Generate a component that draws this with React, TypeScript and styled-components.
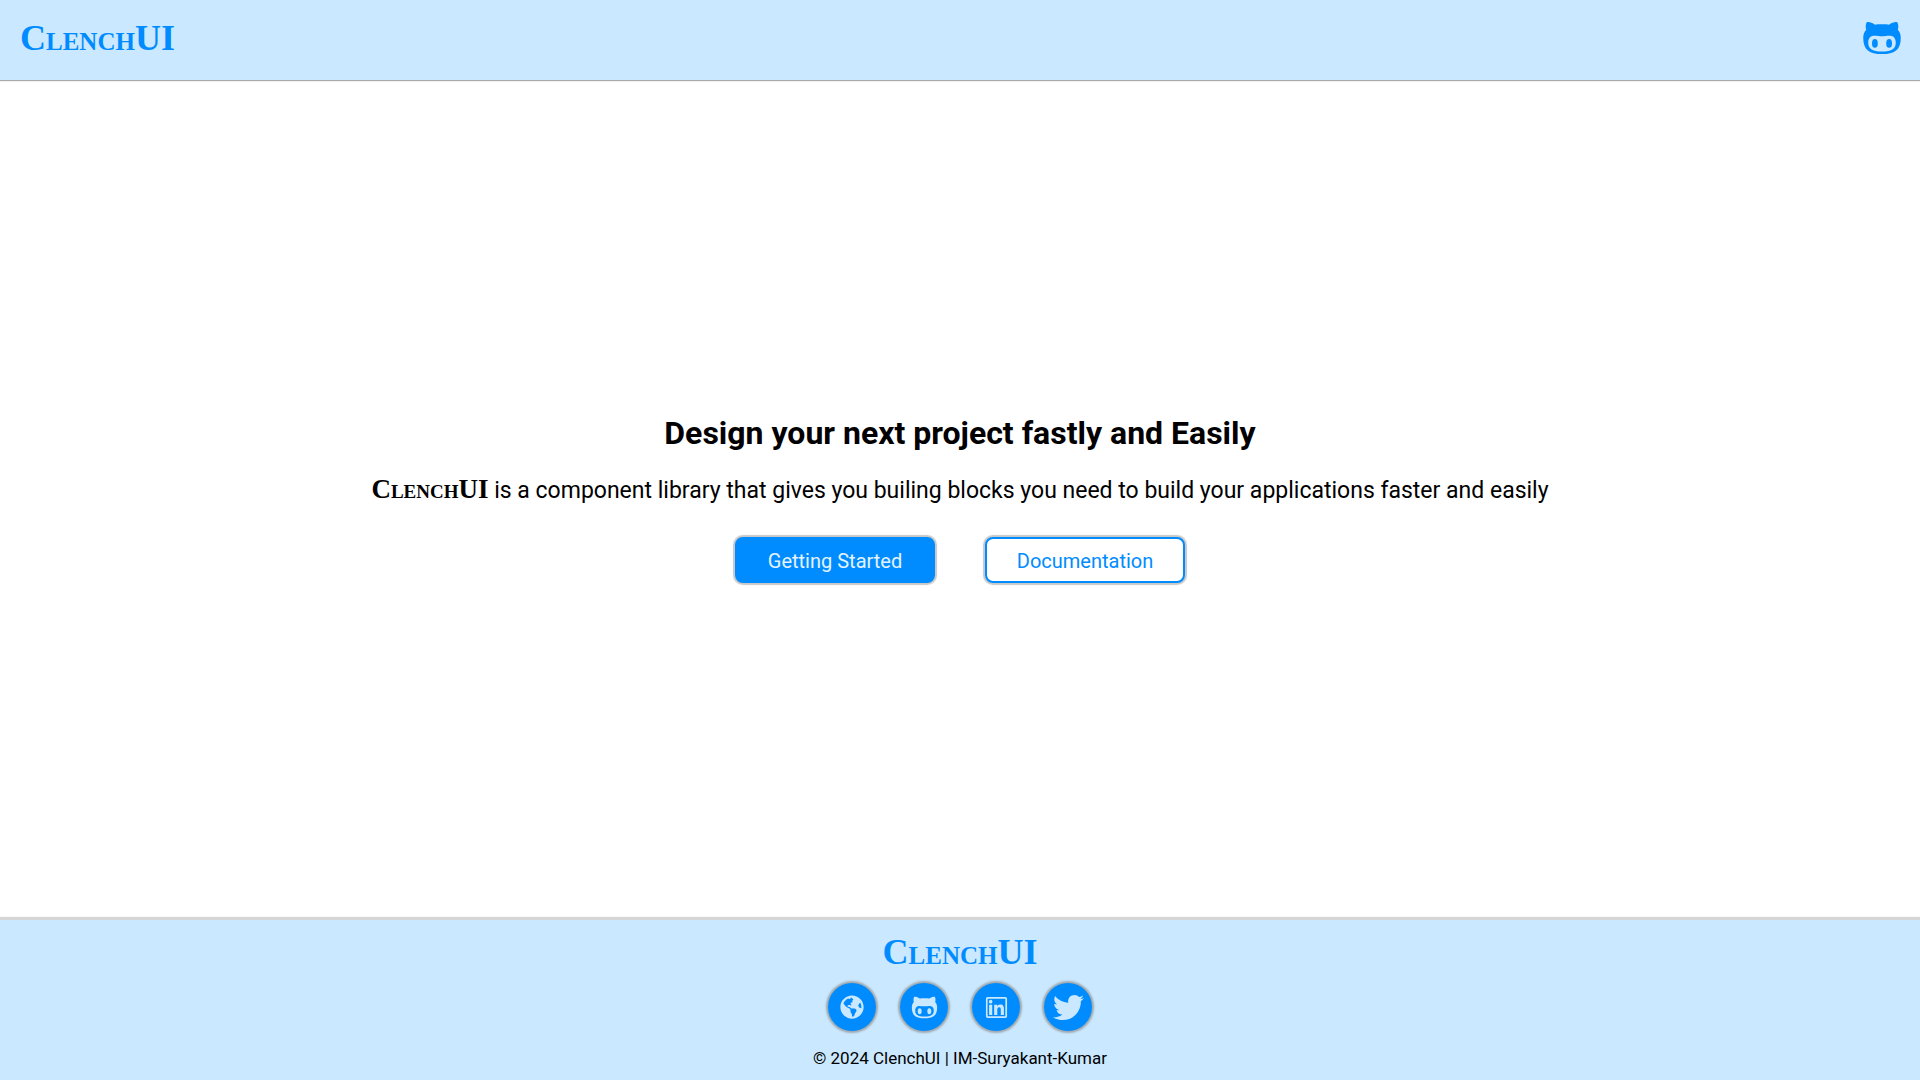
import React from 'react';
import styled, { createGlobalStyle, css } from 'styled-components';
import { FaGlobeAmericas, FaTwitter } from 'react-icons/fa';
import { AiOutlineLinkedin } from 'react-icons/ai';

const accent = '#008cff';
const tint = '#cae8ff';
const sans = "Roboto, 'Noto Sans', sans-serif";
const serif = "'Liberation Serif', 'Times New Roman', serif";

const GlobalStyle = createGlobalStyle`
  * { box-sizing: border-box; }
  body { margin: 0; background: #fff; color: #000; font-family: ${sans}; }
`;

const Page = styled.div`
  min-height: 100vh;
  display: flex;
  flex-direction: column;
`;

const Header = styled.header`
  display: flex;
  align-items: center;
  justify-content: space-between;
  height: 80px;
  padding: 0 18px 4px 20px;
  background: ${tint};
  box-shadow: 0 1px 1px #aaa;
`;

const Brand = styled.a`
  color: ${accent};
  font: 700 36px/36px ${serif};
  font-variant: small-caps;
  text-decoration: none;
`;

const HeaderLink = styled.a`
  display: flex;
  color: ${accent};
  font-size: 40px;
`;

const Hero = styled.main`
  flex: 1;
  display: flex;
  flex-direction: column;
  align-items: center;
  justify-content: center;
  padding: 0 20px;
  text-align: center;
`;

const Title = styled.h1`
  margin: 0 0 28px;
  font-size: 32px;
  line-height: 32px;
  font-weight: 700;
`;

const Lead = styled.p`
  margin: 0 0 32px;
  font-size: 23px;
  line-height: 28px;
`;

const BrandName = styled.strong`
  font: 700 27px/24px ${serif};
  font-variant: small-caps;
`;

const Actions = styled.div`
  display: flex;
  flex-wrap: wrap;
  justify-content: center;
  gap: 50px;
`;

const Button = styled.button<{ $outlined?: boolean }>`
  width: 200px;
  height: 46px;
  padding: 2px 0 0;
  border: 2px solid ${accent};
  border-radius: 8px;
  background: ${accent};
  color: #e3f3ff;
  font: 400 20px/24px ${sans};
  box-shadow: 0 0 1px 2px #c8c8c8;
  cursor: pointer;
  ${(p) => p.$outlined && css`
    background: #fff;
    color: ${accent};
  `}
`;

const Footer = styled.footer`
  display: flex;
  flex-direction: column;
  align-items: center;
  height: 160px;
  padding-top: 14px;
  background: ${tint};
  box-shadow: 0 -1px 1px 2px #d6d6d6;
`;

const Socials = styled.nav`
  display: flex;
  gap: 24px;
  margin: 13px 0 17px;
`;

const SocialLink = styled.a<{ $size: number }>`
  display: flex;
  align-items: center;
  justify-content: center;
  width: 48px;
  height: 48px;
  border-radius: 50%;
  background: ${accent};
  color: ${tint};
  font-size: ${(p) => p.$size}px;
  box-shadow: 0 0 2px 2px #a0a8ac;
`;

const Copyright = styled.p`
  margin: 0;
  font-size: 17px;
  line-height: 20px;
`;

const CatIcon = () => (
  <svg viewBox="-16 -50 512 512" width="1em" height="1em" fill="currentColor" aria-hidden="true">
    <path
      fillRule="evenodd"
      d="M40 10C46-3 60 0 70 2C100 8 130 22 150 35C180 27 300 27 330 35C350 22 380 8 410 2C420 0 434-3 440 10C452 45 450 75 442 100C470 130 480 160 480 205C480 360 400 411 240 411C80 411 0 360 0 205C0 160 10 130 38 100C30 75 28 45 40 10ZM130 178C85 182 64 220 64 262C64 340 110 378 240 378C370 378 416 340 416 262C416 220 395 182 350 178C315 172 280 184 240 184C200 184 165 172 130 178Z"
    />
    <ellipse cx="149" cy="276" rx="37" ry="56" />
    <ellipse cx="331" cy="276" rx="37" ry="56" />
  </svg>
);

const socials = [
  { label: 'Website', Icon: FaGlobeAmericas, size: 24 },
  { label: 'GitHub', Icon: CatIcon, size: 27 },
  { label: 'LinkedIn', Icon: AiOutlineLinkedin, size: 27 },
  { label: 'Twitter', Icon: FaTwitter, size: 31 },
];

export default function App() {
  return (
    <Page>
      <GlobalStyle />
      <Header>
        <Brand href="#">ClenchUI</Brand>
        <HeaderLink href="#github" aria-label="GitHub"><CatIcon /></HeaderLink>
      </Header>
      <Hero>
        <Title>Design your next project fastly and Easily</Title>
        <Lead>
          <BrandName>ClenchUI</BrandName> is a component library that gives you builing blocks you need to build your applications faster and easily
        </Lead>
        <Actions>
          <Button>Getting Started</Button>
          <Button $outlined>Documentation</Button>
        </Actions>
      </Hero>
      <Footer>
        <Brand href="#">ClenchUI</Brand>
        <Socials aria-label="Social links">
          {socials.map(({ label, Icon, size }) => (
            <SocialLink key={label} href={`#${label.toLowerCase()}`} aria-label={label} $size={size}>
              <Icon />
            </SocialLink>
          ))}
        </Socials>
        <Copyright>© 2024 ClenchUI | IM-Suryakant-Kumar</Copyright>
      </Footer>
    </Page>
  );
}
